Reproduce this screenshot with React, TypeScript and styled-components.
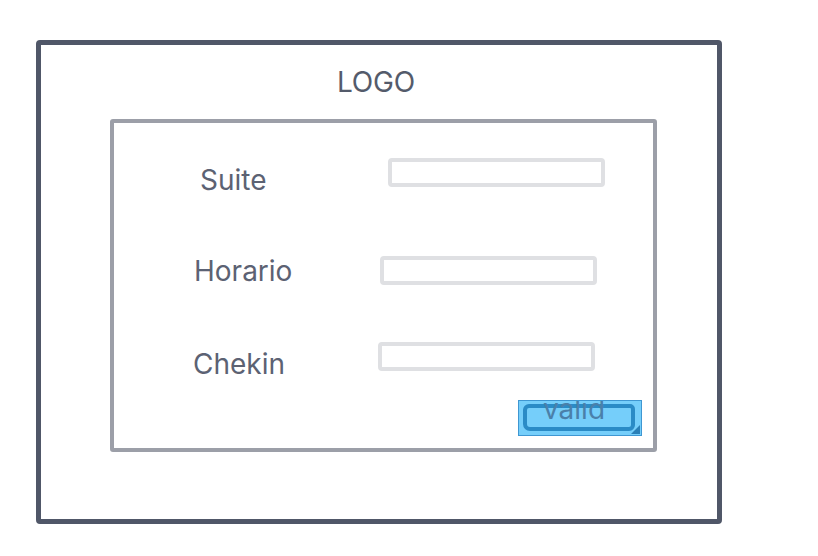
import styled, { createGlobalStyle } from "styled-components";

const GlobalStyle = createGlobalStyle`
  html, body {
    margin: 0;
    padding: 0;
    background: #ffffff;
  }
  * {
    box-sizing: border-box;
  }
`;

const Page = styled.div`
  width: 818px;
  height: 556px;
  padding: 40px 0 0 36px;
  font-family: "Inter", "Liberation Sans", sans-serif;
`;

const Frame = styled.div`
  width: 686px;
  height: 484px;
  border: 5px solid #505768;
  border-radius: 4px;
  display: flex;
  flex-direction: column;
`;

const Logo = styled.div`
  margin-top: 23px;
  padding-right: 6px;
  text-align: center;
  font-size: 28px;
  line-height: 28px;
  color: #545b6b;
  letter-spacing: -0.2px;
`;

const Panel = styled.div`
  margin: 23px 0 0 69px;
  width: 547px;
  height: 333px;
  border: 4px solid #9c9fa8;
  border-radius: 3px;
  padding: 35px 11px 12px 0;
  display: flex;
  flex-direction: column;
`;

const Row = styled.div<{ $mt: number }>`
  display: flex;
  align-items: center;
  height: 29px;
  margin-top: ${(p) => p.$mt}px;
`;

const Label = styled.div<{ $x: number; $drop: number }>`
  width: 264px;
  padding-left: ${(p) => p.$x}px;
  margin-top: ${(p) => p.$drop}px;
  font-size: 28px;
  line-height: 28px;
  color: #5c6273;
`;

const Field = styled.div<{ $shift: number }>`
  margin-left: ${(p) => p.$shift}px;
  width: 217px;
  height: 29px;
  border: 4px solid #dfe0e3;
  border-radius: 4px;
`;

const Footer = styled.div`
  margin-top: 29px;
  display: flex;
  justify-content: flex-end;
`;

const Button = styled.div`
  position: relative;
  width: 124px;
  height: 36px;
  background: #75cefa;
  border: 1px solid #3f97d2;
  overflow: hidden;
  padding-left: 24px;
`;

const ButtonOutline = styled.div`
  position: absolute;
  left: 4px;
  right: 6px;
  top: 3px;
  bottom: 4px;
  border: 4px solid #2a8bc6;
  border-radius: 6px 5px 6px 7px;
`;

const ButtonText = styled.div`
  position: relative;
  margin-top: -6px;
  font-size: 28px;
  line-height: 28px;
  color: #4a80aa;
`;

const Handle = styled.div`
  position: absolute;
  right: 1px;
  bottom: 1px;
  width: 0;
  height: 0;
  border-left: 9px solid transparent;
  border-bottom: 9px solid #2a7fb6;
`;

const rows = [
  { label: "Suite", mt: 0, x: 86, drop: 15, shift: 10 },
  { label: "Horario", mt: 69, x: 80, drop: 0, shift: 2 },
  { label: "Chekin", mt: 57, x: 79, drop: 15, shift: 0 },
];

export default function App() {
  return (
    <Page>
      <GlobalStyle />
      <Frame>
        <Logo>LOGO</Logo>
        <Panel>
          {rows.map((r) => (
            <Row key={r.label} $mt={r.mt}>
              <Label $x={r.x} $drop={r.drop}>
                {r.label}
              </Label>
              <Field $shift={r.shift} />
            </Row>
          ))}
          <Footer>
            <Button>
              <ButtonOutline />
              <ButtonText>valid</ButtonText>
              <Handle />
            </Button>
          </Footer>
        </Panel>
      </Frame>
    </Page>
  );
}
